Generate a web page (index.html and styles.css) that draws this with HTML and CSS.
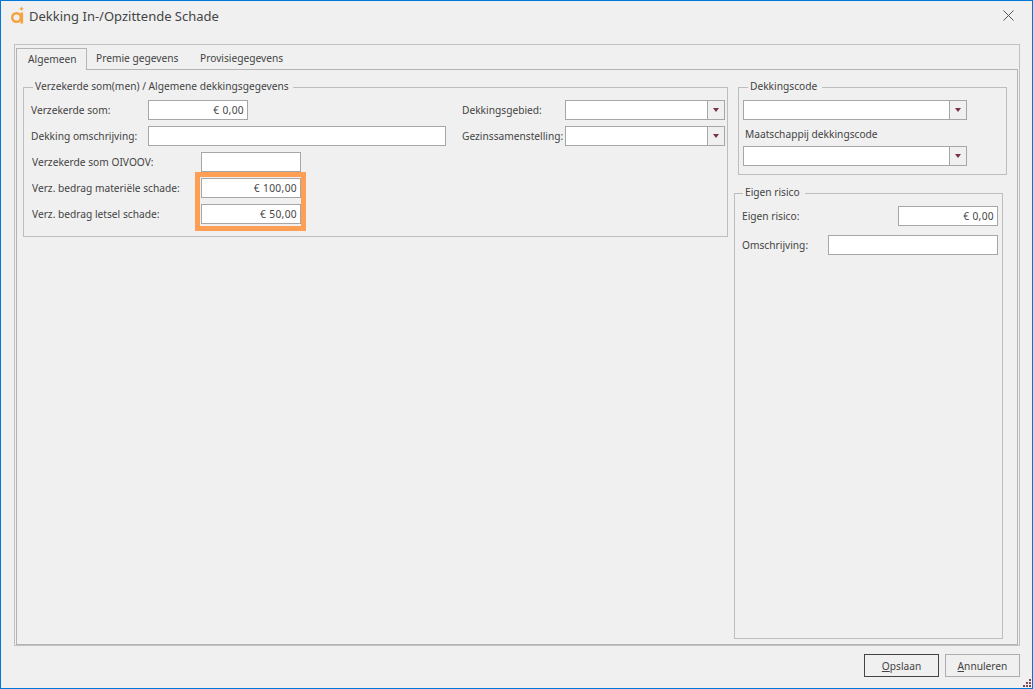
FILE: index.html
```html
<!DOCTYPE html>
<html lang="nl">
<head>
<meta charset="utf-8">
<title>Dekking In-/Opzittende Schade</title>
<link rel="stylesheet" href="styles.css">
</head>
<body>
<div class="window">
  <header class="titlebar">
    <svg class="logo" width="14" height="17" viewBox="0 0 14 17"><circle cx="5.500" cy="10.500" r="4.300" fill="none" stroke="#f7a13c" stroke-width="2.400"/><rect x="9.500" y="5.500" width="2.600" height="11" fill="#f7a13c"/><path d="M10.500 0v3.600M8.700 1.800h3.600" stroke="#f7a13c" stroke-width="1.200"/></svg>
    <h1 class="title">Dekking In-/Opzittende Schade</h1>
    <svg class="close" width="11" height="11" viewBox="0 0 11 11"><path d="M.5.5l10 10M10.500 .5l-10 10" stroke="#555" stroke-width="1" fill="none"/></svg>
  </header>
  <main class="tabcontrol">
    <nav class="tabs">
      <div class="tab active">Algemeen</div>
      <div class="tab t2">Premie gegevens</div>
      <div class="tab t3">Provisiegegevens</div>
    </nav>
    <div class="panel">
      <fieldset class="group g-main">
        <legend>Verzekerde som(men) / Algemene dekkingsgegevens</legend>
        <div class="cols">
          <div class="col-left">
            <div class="row"><label class="l-a">Verzekerde som:</label><div class="input w100">€ 0,00</div></div>
            <div class="row"><label class="l-a">Dekking omschrijving:</label><div class="input w298"></div></div>
            <div class="row"><label class="l-b">Verzekerde som OIVOOV:</label><div class="input w100"></div></div>
            <div class="row"><label class="l-b">Verz. bedrag materiële schade:</label><div class="input w100">€ 100,00</div></div>
            <div class="row"><label class="l-b">Verz. bedrag letsel schade:</label><div class="input w100">€ 50,00</div></div>
            <div class="highlight"></div>
          </div>
          <div class="col-right">
            <div class="row"><label class="l-c">Dekkingsgebied:</label><div class="combo w160"><span class="combo-text"></span><span class="combo-btn"><i class="arrow"></i></span></div></div>
            <div class="row"><label class="l-c">Gezinssamenstelling:</label><div class="combo w160"><span class="combo-text"></span><span class="combo-btn"><i class="arrow"></i></span></div></div>
          </div>
        </div>
      </fieldset>
      <div class="side">
        <fieldset class="group g-code">
          <legend>Dekkingscode</legend>
          <div class="combo w224"><span class="combo-text"></span><span class="combo-btn"><i class="arrow"></i></span></div>
          <div class="sublabel">Maatschappij dekkingscode</div>
          <div class="combo w224"><span class="combo-text"></span><span class="combo-btn"><i class="arrow"></i></span></div>
        </fieldset>
        <fieldset class="group g-risk">
          <legend>Eigen risico</legend>
          <div class="row spread"><label>Eigen risico:</label><div class="input w100">€ 0,00</div></div>
          <div class="row spread second"><label>Omschrijving:</label><div class="input w170"></div></div>
        </fieldset>
      </div>
    </div>
  </main>
  <footer class="footer">
    <button class="btn default"><u>O</u>pslaan</button>
    <button class="btn"><u>A</u>nnuleren</button>
  </footer>
  <svg class="grip" width="8" height="8" viewBox="0 0 8 8"><path d="M6 0h2v2H6zM3 3h2v2H3zM6 3h2v2H6zM0 6h2v2H0zM3 6h2v2H3zM6 6h2v2H6z" fill="#7a4a55"/></svg>
</div>
</body>
</html>
```
FILE: styles.css
```css
* { box-sizing: border-box; }
html, body { margin: 0; padding: 0; }
body { width: 1033px; height: 689px; overflow: hidden; }
.window {
  position: relative;
  width: 1033px; height: 689px;
  border: 1px solid #0078d7;
  background: #f0f0f0;
  color: #444;
  font: 10.2px/14px "Noto Sans", sans-serif;
  display: flex; flex-direction: column;
  padding: 0 12px 0 13px;
}
.titlebar { height: 43px; flex: none; display: flex; align-items: flex-start; margin-left: -3px; margin-right: 6px; }
.logo { margin-top: 6px; flex: none; }
.title { margin: 6px 0 0 4px; font: 400 13px/19px "Noto Sans", sans-serif; color: #444; flex: 1; }
.close { margin-top: 9px; flex: none; }
.tabcontrol { width: 1006px; height: 602px; flex: none; border: 1px solid #c0c0c0; padding: 3px 1px 0; display: flex; flex-direction: column; }
.tabs { display: flex; height: 21px; flex: none; position: relative; z-index: 1; }
.tab { line-height: 21px; }
.tab.active { width: 71px; height: 22px; padding-left: 11px; border: 1px solid #b4b4b4; border-bottom: 0; background: #f0f0f0; line-height: 20px; }
.t2 { margin-left: 9px; width: 104px; }
.t3 { flex: none; }
.panel { flex: 1; border: 1px solid #b4b4b4; padding: 10px 0 5px 6px; display: flex; align-items: stretch; min-height: 0; }
.group { margin: 0; border: 1px solid #bdbdbd; min-width: 0; }
.group legend { padding: 0 5px 0 2px; line-height: 13px; height: 14px; }
.g-main { width: 705px; height: 157px; flex: none; padding: 6px 0 0 7px; }
.g-main legend { margin-left: 2px; padding-right: 4px; }
.cols { display: flex; }
.col-left { width: 431px; flex: none; position: relative; }
.row { display: flex; align-items: center; height: 20px; margin-bottom: 6px; }
.row label { display: block; }
.l-a { width: 117px; }
.l-b { width: 170px; padding-left: 1px; }
.l-c { width: 103px; }
.input { height: 20px; border: 1px solid #a6a6a6; background: #fff; text-align: right; padding: 0 3px; line-height: 18px; letter-spacing: .35px; }
.w100 { width: 100px; }
.w298 { width: 298px; }
.w170 { width: 170px; }
.combo { height: 20px; border: 1px solid #a6a6a6; background: #fff; display: flex; }
.w160 { width: 160px; }
.w224 { width: 224px; }
.combo-text { flex: 1; }
.combo-btn { width: 17px; flex: none; background: #f0f0f0; border-left: 1px solid #a6a6a6; display: flex; align-items: center; justify-content: center; }
.arrow { width: 0; height: 0; border: 3.5px solid transparent; border-top: 4px solid #7a3345; border-bottom: 0; }
.highlight { position: absolute; left: 164px; top: 72px; width: 111px; height: 59px; border: 5px solid #ff9f56; pointer-events: none; }
.side { width: 273px; margin-left: 6px; flex: none; display: flex; flex-direction: column; }
.g-code { width: 269px; margin-left: 4px; padding: 6px 0 8px 4px; flex: none; }
.g-code legend { margin-left: 5px; }
.sublabel { height: 26px; line-height: 28px; padding-left: 2px; }
.g-risk { width: 269px; margin-top: 11px; flex: 1; padding: 6px 4px 0 7px; min-height: 0; }
.g-risk legend { margin-left: 1px; }
.spread { justify-content: space-between; margin-bottom: 9px; }
.footer { margin-top: 8px; width: 1006px; display: flex; justify-content: flex-end; gap: 6px; }
.btn { width: 75px; height: 23px; padding: 0; background: #f0f0f0; border: 1px solid #adadad; color: #444; font: 10.2px/14px "Noto Sans", sans-serif; }
.btn.default { border-color: #444; }
.grip { position: absolute; right: 1px; bottom: 1px; }
```
